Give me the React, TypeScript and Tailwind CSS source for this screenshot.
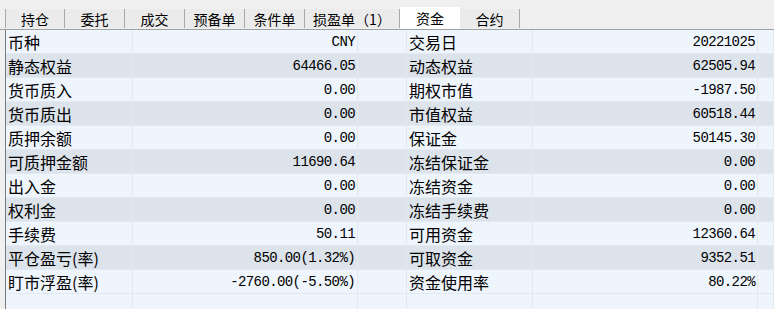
import React from "react";

const rows: [string, string, string, string][] = [
  ["币种", "CNY", "交易日", "20221025"],
  ["静态权益", "64466.05", "动态权益", "62505.94"],
  ["货币质入", "0.00", "期权市值", "-1987.50"],
  ["货币质出", "0.00", "市值权益", "60518.44"],
  ["质押余额", "0.00", "保证金", "50145.30"],
  ["可质押金额", "11690.64", "冻结保证金", "0.00"],
  ["出入金", "0.00", "冻结资金", "0.00"],
  ["权利金", "0.00", "冻结手续费", "0.00"],
  ["手续费", "50.11", "可用资金", "12360.64"],
  ["平仓盈亏(率)", "850.00(1.32%)", "可取资金", "9352.51"],
  ["盯市浮盈(率)", "-2760.00(-5.50%)", "资金使用率", "80.22%"],
];

const tabs = [
  { label: "持仓", w: "w-[60px]" },
  { label: "委托", w: "w-[60px]" },
  { label: "成交", w: "w-[60px]" },
  { label: "预备单", w: "w-[60px]" },
  { label: "条件单", w: "w-[60px]" },
  { label: "损盈单（1）", w: "w-[95px]" },
];

const cjk = "[font-family:'Noto_Sans_CJK_SC',sans-serif]";

function Label({ text }: { text: string }) {
  return (
    <div className="h-[24px] border-r border-b border-[#e3e9f0] pl-[2px] flex items-center text-[16px] leading-none text-black [font-family:'Noto_Sans_CJK_SC',sans-serif] whitespace-nowrap">
      {text}
    </div>
  );
}

function Value({ text }: { text: string }) {
  return (
    <div className="h-[24px] border-r border-b border-[#e3e9f0] pr-[2px] flex items-center justify-end text-[14px] tracking-[-0.6px] leading-none text-black [font-family:'Liberation_Mono',monospace] whitespace-nowrap">
      {text}
    </div>
  );
}

function Blank() {
  return <div className="h-[24px] border-r border-b border-[#e3e9f0]" />;
}

export default function App() {
  return (
    <div className="w-[774px] h-[309px] bg-[#f0f0f0] overflow-hidden">
      {/* tab strip */}
      <div className="h-[30px] border-b border-[#a0a0a0] flex items-start pl-[5px]">
        <div className="flex pt-[9px]">
          {tabs.map((t, i) => (
            <div
              key={t.label}
              className={`${t.w} h-[19px] bg-[#ebebeb] border-r border-[#a8a8a8] ${i === 0 ? "border-l" : ""} flex items-center justify-center text-[14px] leading-none text-black ${cjk}`}
            >
              {t.label}
            </div>
          ))}
        </div>
        <div className={`w-[60px] h-[22px] mt-[7px] bg-white flex items-center justify-center text-[14px] leading-none text-black ${cjk}`}>
          资金
        </div>
        <div className="flex pt-[9px]">
          <div className={`w-[60px] h-[19px] bg-[#ebebeb] border-r border-[#a8a8a8] flex items-center justify-center text-[14px] leading-none text-black ${cjk}`}>
            合约
          </div>
        </div>
      </div>

      {/* table */}
      <div className="ml-[5px] border-l border-[#7a7a7a] h-[279px] bg-[#eff5fc]">
        <div className="grid grid-cols-[127px_225px_49px_126px_225px_1fr]">
          {rows.map((r, i) => (
            <div
              key={r[0]}
              className={`col-span-6 grid grid-cols-subgrid ${i % 2 === 1 ? "bg-[#dce3ea]" : "bg-[#eff5fc]"}`}
            >
              <Label text={r[0]} />
              <Value text={r[1]} />
              <Blank />
              <Label text={r[2]} />
              <Value text={r[3]} />
              <Blank />
            </div>
          ))}
          <div className="col-span-6 grid grid-cols-subgrid bg-[#eff5fc]">
            <Blank />
            <Blank />
            <Blank />
            <Blank />
            <Blank />
            <Blank />
          </div>
        </div>
      </div>
    </div>
  );
}
